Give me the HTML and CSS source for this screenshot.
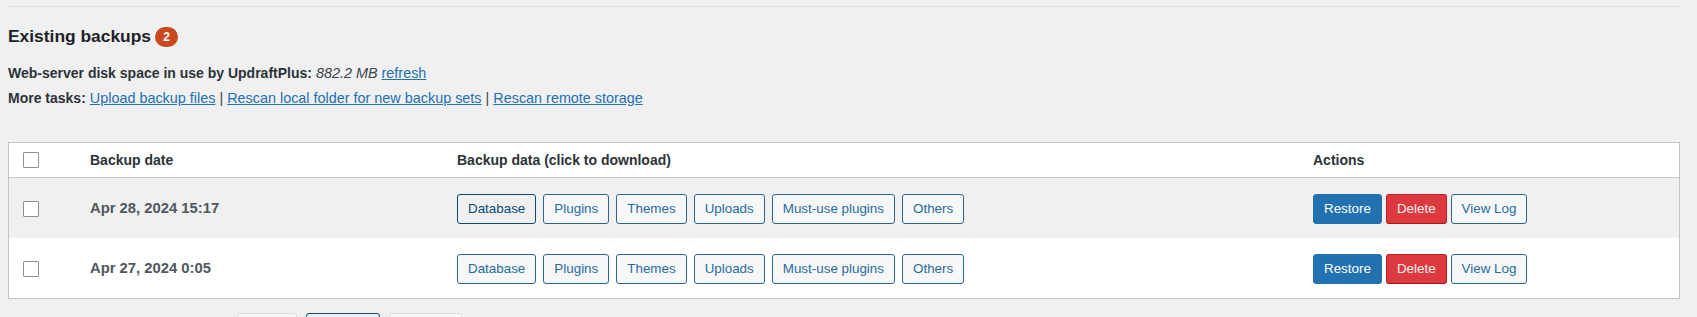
FILE: index.html
```html
<!DOCTYPE html>
<html lang="en">
<head>
  <meta charset="utf-8">
  <title>Existing backups</title>
  <link rel="stylesheet" href="styles.css">
</head>
<body>

  <div class="wrap">
    <div class="rule"></div>

    <h2 class="title">Existing backups <span class="count">2</span></h2>

    <p class="usage"><strong>Web-server disk space in use by UpdraftPlus:</strong> <em>882.2 MB</em> <a href="#">refresh</a></p>
    <p class="tasks"><strong>More tasks:</strong> <a href="#">Upload backup files</a> | <a href="#">Rescan local folder for new backup sets</a> | <a href="#">Rescan remote storage</a></p>

    <div class="backups">
      <div class="row head">
        <div class="cell check"><input type="checkbox"></div>
        <div class="cell">Backup date</div>
        <div class="cell">Backup data (click to download)</div>
        <div class="cell">Actions</div>
      </div>

      <div class="row alt">
        <div class="cell check"><input type="checkbox"></div>
        <div class="cell date">Apr 28, 2024 15:17</div>
        <div class="cell entities">
          <button class="btn focus">Database</button>
          <button class="btn">Plugins</button>
          <button class="btn">Themes</button>
          <button class="btn">Uploads</button>
          <button class="btn">Must-use plugins</button>
          <button class="btn">Others</button>
        </div>
        <div class="cell actions">
          <button class="btn primary">Restore</button>
          <button class="btn danger">Delete</button>
          <button class="btn">View Log</button>
        </div>
      </div>

      <div class="row">
        <div class="cell check"><input type="checkbox"></div>
        <div class="cell date">Apr 27, 2024 0:05</div>
        <div class="cell entities">
          <button class="btn">Database</button>
          <button class="btn">Plugins</button>
          <button class="btn">Themes</button>
          <button class="btn">Uploads</button>
          <button class="btn">Must-use plugins</button>
          <button class="btn">Others</button>
        </div>
        <div class="cell actions">
          <button class="btn primary">Restore</button>
          <button class="btn danger">Delete</button>
          <button class="btn">View Log</button>
        </div>
      </div>
    </div>

    <div class="bulk">
      <span class="bulk-label">Actions upon selected backups</span>
      <button class="btn disabled">Delete</button>
      <button class="btn focus">Select all</button>
      <button class="btn disabled">Deselect</button>
    </div>
  </div>

</body>
</html>
```

FILE: styles.css
```css
* {
  box-sizing: border-box;
}
html, body {
  margin: 0;
  background-color: #f0f0f1;
  font-family: "Liberation Sans", Arial, sans-serif;
  font-size: 14px;
  color: #3c434a;
}
body {
  height: 317px;
  overflow: hidden;
}
.wrap {
  padding: 0 17px 0 8px;
}
.rule {
  margin-top: 6px;
  border-top: 1px solid #dcdcde;
}
.title {
  display: flex;
  align-items: center;
  gap: 4px;
  margin: 17px 0 0;
  height: 24px;
  font-size: 17.4px;
  font-weight: 700;
  color: #1d2327;
}
.count {
  display: inline-block;
  width: 23px;
  height: 20px;
  line-height: 20px;
  border-radius: 10px;
  background-color: #c9491f;
  color: #fff;
  font-size: 12px;
  font-weight: 700;
  text-align: center;
  position: relative;
  top: 1px;
}
.usage, .tasks {
  margin: 0;
  line-height: 20px;
  font-size: 14.4px;
}
.usage strong, .tasks strong {
  font-size: 14px;
  color: #2c3338;
}
.usage {
  margin-top: 15px;
}
.tasks {
  margin-top: 5px;
}
a {
  color: #2271b1;
}

/* backups table */
.backups {
  margin-top: 34px;
  background-color: #fff;
  border: 1px solid #c3c4c7;
}
.row {
  display: grid;
  grid-template-columns: 81px 367px 856px 1fr;
  align-items: center;
  height: 60px;
}
.row.head {
  height: 35px;
  border-bottom: 1px solid #c3c4c7;
  font-weight: 700;
  color: #2c3338;
}
.row.alt {
  background-color: #f0f0f1;
}
.check {
  padding-left: 14px;
  display: flex;
  align-items: center;
}
.row:not(.head) .check {
  padding-top: 2px;
}
[type=checkbox] {
  -webkit-appearance: none;
  appearance: none;
  margin: 0;
  width: 16px;
  height: 16px;
  border: 1px solid #8c8f94;
  border-radius: 1px;
  background-color: #fff;
}
.date {
  font-weight: 700;
  font-size: 14.8px;
  color: #50575e;
}
.entities, .actions {
  display: flex;
  align-items: center;
}
.entities {
  gap: 7px;
}
.actions {
  gap: 4px;
}

/* buttons */
.btn {
  height: 30px;
  padding: 0 10px;
  margin: 0;
  font-family: inherit;
  font-size: 13.4px;
  line-height: 28px;
  color: #2a6b9c;
  background-color: #f6f7f7;
  border: 1px solid #2c6590;
  border-radius: 3px;
  white-space: nowrap;
}
.row:not(.head) .btn {
  margin-top: 1px;
}
.btn.focus {
  color: #0a4b78;
  border-color: #0a4b78;
  background-color: #f0f0f1;
}
.btn.primary {
  background-color: #2271b1;
  border-color: #2271b1;
  color: #fff;
}
.btn.danger {
  background-color: #dc3a3f;
  border-color: #c01f25;
  border-bottom-color: #a8151a;
  color: #fdeeee;
}
.btn.disabled {
  color: #a7aaad;
  border-color: #dcdcde;
  background-color: #f6f7f7;
}

/* bulk actions below table */
.bulk {
  display: flex;
  align-items: center;
  gap: 9px;
  margin-top: 14px;
}
.bulk .btn {
  font-size: 13px;
}
.bulk-label {
  width: 220px;
}
```
